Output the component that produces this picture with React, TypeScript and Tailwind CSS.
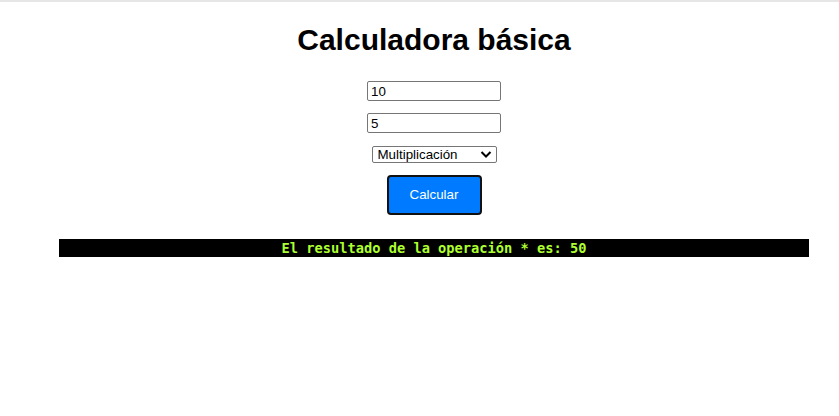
import React from "react";

export default function App() {
  return (
    <div className="w-[839px] h-[416px] bg-white border-t-2 border-[#e6e6e6] overflow-hidden" style={{ fontFamily: "Arial, 'Liberation Sans', sans-serif" }}>
      <div className="ml-[59px] w-[750px] flex flex-col items-center">
        <h1 className="mt-[19px] h-[37px] leading-[37px] text-[30px] font-bold text-black whitespace-nowrap">
          Calculadora básica
        </h1>
        <input
          type="text"
          defaultValue="10"
          className="block mt-[23px] w-[134px] h-[20px] border border-[#767676] rounded-[2px] px-[3px] text-[13.33px] text-black outline-none"
        />
        <input
          type="text"
          defaultValue="5"
          className="block mt-[12px] w-[134px] h-[20px] border border-[#767676] rounded-[2px] px-[3px] text-[13.33px] text-black outline-none"
        />
        <div className="relative mt-[13px] w-[125px] h-[17px]">
          <select
            defaultValue="mul"
            className="block appearance-none w-full h-[17px] border border-[#767676] rounded-[2px] pl-[5px] pr-[20px] py-0 text-[13.33px] leading-[15px] text-black bg-white outline-none"
          >
            <option value="sum">Suma</option>
            <option value="res">Resta</option>
            <option value="mul">Multiplicación</option>
            <option value="div">División</option>
          </select>
          <svg
            className="absolute right-[5px] top-[4px] pointer-events-none"
            width="12"
            height="9"
            viewBox="0 0 12 9"
          >
            <path d="M1.5 2 L6 6.5 L10.5 2" fill="none" stroke="#000" strokeWidth="2" />
          </svg>
        </div>
        <button className="block mt-[12px] w-[95px] h-[40px] bg-[#007bff] border-2 border-[#111] rounded-[4px] text-white text-[13.33px]">
          Calcular
        </button>
      </div>
      <div className="ml-[59px] mt-[24px] w-[750px] h-[18px] bg-black text-center leading-[18px] whitespace-nowrap">
        <span className="text-[13.7px] font-bold text-[#adff2f]" style={{ fontFamily: "'DejaVu Sans Mono', monospace" }}>
          El resultado de la operación * es: 50
        </span>
      </div>
    </div>
  );
}
